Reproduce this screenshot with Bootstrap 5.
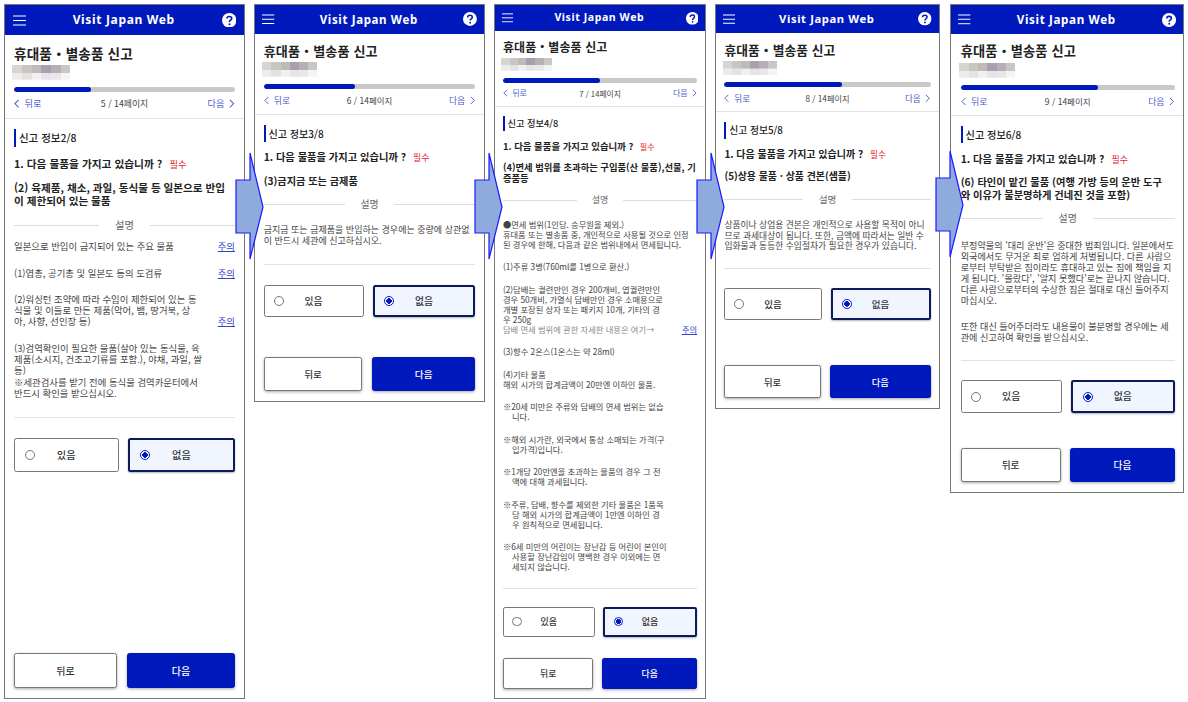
<!DOCTYPE html>
<html lang="ko">
<head>
  <meta charset="UTF-8" />
  <meta name="viewport" content="width=device-width, initial-scale=1.0"/>
  <link href="https://cdn.jsdelivr.net/npm/bootstrap@5.3.0/dist/css/bootstrap.min.css" rel="stylesheet"/>
  <title>Visit Japan Web</title>
  <style>
    html, body { height: 100%; }
    body { background: #fff; font-family: "Noto Sans CJK KR", "Noto Sans", sans-serif; color: #333; overflow: hidden; }
    .canvas { width: 1188px; height: 702px; }

    /* five phone captures on a free canvas, each one with its own scale */
    .phone { position: absolute; top: 4px; border: 1px solid #777; background: #fff; }
    .phone-5 { left: 4px; width: 241px; height: 695px; font-size: 10px; }
    .phone-6 { left: 254px; width: 231px; height: 398px; font-size: 9.6px; }
    .phone-7 { left: 494px; width: 212px; height: 695px; font-size: 8.8px; }
    .phone-8 { left: 715px; width: 225px; height: 405px; font-size: 9.35px; }
    .phone-9 { left: 950px; width: 234px; height: 489px; font-size: 9.7px; }

    .app-head { height: 3em; background: #0019bd; color: #fff; padding: 0 .75em; flex: none; }
    .app-title { font-family: "Noto Sans", sans-serif; font-weight: 700; font-size: 1.2em; letter-spacing: .055em; }
    .ico-menu { width: 1.3em; height: 1.1em; }
    .ico-help { width: 1.45em; height: 1.45em; }

    .page-top { padding: .75em .9em 0; border-bottom: 1px solid #e2e2e2; flex: none; }
    .page-name { font-size: 1.36em; font-weight: 700; line-height: 1.5; color: #222; letter-spacing: .01em; }
    .blur-name { width: 5.8em; height: 1.5em; margin: .2em 0 0 -.2em; background:
      linear-gradient(to right, #d8d5d0 0 17%, #c9c6c2 17% 34%, #bdbab8 34% 50%, #a99fae 50% 67%, #b5b0b6 67% 84%, #c9c6c6 84%) top / 100% 55% no-repeat,
      linear-gradient(to right, #ececea 0 17%, #e4e3e3 17% 34%, #f0f0f0 34% 50%, #e6e4e8 50% 67%, #e8e8e8 67% 84%, #f4f4f4 84%) bottom / 100% 45% no-repeat; }
    .step-bar { height: .42em; margin-top: .6em; background: #c9c9c9; border-radius: 1em; }
    .step-bar .progress-bar { background: #0019bd; border-radius: 1em; }
    .step-nav { height: 2.55em; font-size: 1em; padding-bottom: .2em; }
    .step-link { color: #4a5ccb; font-size: .92em; text-decoration: none; display: inline-flex; align-items: center; gap: .55em; }
    .step-count { color: #444; font-size: .88em; }
    .ico-chev { width: .6em; height: 1em; }

    .page-body { padding: 0 .9em; min-height: 0; }
    .phone-9 .page-top, .phone-9 .page-body { padding-left: 1em; padding-right: .85em; }
    .sec-name { border-left: .22em solid #0019bd; padding-left: .28em; margin-top: 1em; height: 1.7em; line-height: 1.7em; font-size: 1.05em; font-weight: 500; color: #222; }
    .ask { font-size: 1.07em; font-weight: 600; margin-top: .75em; line-height: 1.6; color: #222; }
    .must { color: #e8192c; font-size: .86em; font-weight: 400; margin-left: .8em; }
    .item-name { font-size: 1.06em; font-weight: 600; line-height: 1.25; margin-top: .85em; color: #222; }
    .rule-label { color: #666; font-size: 1.03em; margin-top: .95em; gap: 1.6em; }
    .rule-label::before, .rule-label::after { content: ""; flex: 1; border-top: 1px solid #ddd; }
    .explain { font-size: .94em; line-height: 1.2; margin-top: 1.55em; color: #444; white-space: nowrap; }
    .phone-5 .explain { margin-top: .9em; }
    .explain p { margin: 0 0 1.6em; }
    .phone-7 .explain p { margin-bottom: 1.54em; }
    .explain p:last-child { margin-bottom: 0; }
    .explain a { color: #3344cc; }
    .note { padding-left: 1.1em; text-indent: -1.1em; }
    .soft { color: #888; }
    .end-rule { border-top: 1px solid #e2e2e2; margin-top: 1.8em; }

    .choice { flex: 1 1 0; height: 3.4em; border: 1px solid #777; border-radius: .25em; background: #fff; padding-left: .95em; font-size: 1em; font-weight: 500; color: #333; }
    .choice.on { border: 2px solid #0a1a5a; background: #f0f5ff; box-shadow: 0 1px 2px rgba(0,0,0,.3); }
    .choice span { flex: 1; text-align: center; padding-right: 2em; font-size: 1.02em; }
    .choice .form-check-input { margin: 0; width: 1.05em; height: 1.05em; border-color: #777; flex: none; }
    .choice .form-check-input:checked[type=radio] { background-color: #fff; border-color: #0019bd; background-image: radial-gradient(circle, #0019bd 0 46%, #fff 52%); }
    .choices { gap: .95em; margin-top: 2em; }

    .acts { gap: 1em; flex: none; margin-bottom: 1.05em; }
    .act { height: 3.5em; padding: 0; border-radius: .25em; font-size: 1em; font-weight: 500; box-shadow: 0 1px 3px rgba(0,0,0,.35); }
    .act-back { flex: 103 1 0; background: #fff; border: 1px solid #777; color: #333; }
    .act-next { flex: 108 1 0; background: #0019bd; border: 1px solid #0019bd; color: #fff; }

    .flow-arrow { position: absolute; width: 30px; height: 110px; top: 151px; overflow: visible; }
    .arrow-a { left: 235px; } .arrow-b { left: 474px; } .arrow-c { left: 696px; } .arrow-d { left: 935px; top: 149px; }
    .flow-arrow polygon { fill: #8faadc; stroke: #1a1aff; stroke-width: 1.2; }
  </style>
</head>
<body>
  <svg width="0" height="0" class="position-absolute">
    <symbol id="i-menu" viewBox="0 0 13 11"><path d="M0 1h13M0 5.5h13M0 10h13" stroke="#fff" stroke-width="1.1"/></symbol>
    <symbol id="i-help" viewBox="0 0 16 16"><circle cx="8" cy="8" r="8" fill="#fff"/><path d="M5.4 6.2c0-1.5 1.1-2.4 2.7-2.4s2.6.9 2.6 2.2c0 1.9-2.5 2-2.5 3.9" fill="none" stroke="#0019bd" stroke-width="1.8"/><circle cx="8.2" cy="12.3" r="1.1" fill="#0019bd"/></symbol>
    <symbol id="i-prev" viewBox="0 0 6 10"><path d="M5 1 1 5l4 4" fill="none" stroke="#4a5ccb" stroke-width="1.1"/></symbol>
    <symbol id="i-next" viewBox="0 0 6 10"><path d="m1 1 4 4-4 4" fill="none" stroke="#4a5ccb" stroke-width="1.1"/></symbol>
  </svg>

  <div class="canvas">

    <!-- 5 / 14 -->
    <section class="phone phone-5 d-flex flex-column">
      <header class="app-head d-flex align-items-center justify-content-between">
        <svg class="ico-menu"><use href="#i-menu"/></svg><span class="app-title">Visit Japan Web</span><svg class="ico-help"><use href="#i-help"/></svg>
      </header>
      <div class="page-top">
        <div class="page-name">휴대품・별송품 신고</div>
        <div class="blur-name"></div>
        <div class="progress step-bar"><div class="progress-bar" style="width: 35%"></div></div>
        <div class="step-nav d-flex align-items-center justify-content-between">
          <a class="step-link" href="#"><svg class="ico-chev"><use href="#i-prev"/></svg>뒤로</a><span class="step-count">5 / 14페이지</span><a class="step-link" href="#">다음<svg class="ico-chev"><use href="#i-next"/></svg></a>
        </div>
      </div>
      <div class="page-body flex-grow-1 d-flex flex-column">
        <div class="sec-name">신고 정보2/8</div>
        <div class="ask">1. 다음 물품을 가지고 있습니까 ?<span class="must">필수</span></div>
        <div class="item-name">(2) 육제품, 채소, 과일, 동식물 등 일본으로 반입<br>이 제한되어 있는 물품</div>
        <div class="rule-label d-flex align-items-center">설명</div>
        <div class="explain">
          <p class="d-flex justify-content-between align-items-end"><span>일본으로 반입이 금지되어 있는 주요 물품</span><a href="#">주의</a></p>
          <p class="d-flex justify-content-between align-items-end"><span>(1)엽총, 공기총 및 일본도 등의 도검류</span><a href="#">주의</a></p>
          <p class="d-flex justify-content-between align-items-end"><span>(2)워싱턴 조약에 따라 수입이 제한되어 있는 동<br>식물 및 이들로 만든 제품(악어, 뱀, 땅거북, 상<br>아, 사향, 선인장 등)</span><a href="#">주의</a></p>
          <p>(3)검역확인이 필요한 물품(살아 있는 동식물, 육<br>제품(소시지, 건조고기류를 포함.), 야채, 과일, 쌀<br>등)<br>※세관검사를 받기 전에 동식물 검역카운터에서<br>반드시 확인을 받으십시오.</p>
        </div>
        <div class="end-rule"></div>
        <div class="choices d-flex">
          <label class="choice d-flex align-items-center"><input class="form-check-input" type="radio" name="r5"><span>있음</span></label>
          <label class="choice on d-flex align-items-center"><input class="form-check-input" type="radio" name="r5" checked><span>없음</span></label>
        </div>
        <div class="acts d-flex mt-auto">
          <button class="btn act act-back" type="button">뒤로</button>
          <button class="btn act act-next" type="button">다음</button>
        </div>
      </div>
    </section>

    <!-- 6 / 14 -->
    <section class="phone phone-6 d-flex flex-column">
      <header class="app-head d-flex align-items-center justify-content-between">
        <svg class="ico-menu"><use href="#i-menu"/></svg><span class="app-title">Visit Japan Web</span><svg class="ico-help"><use href="#i-help"/></svg>
      </header>
      <div class="page-top">
        <div class="page-name">휴대품・별송품 신고</div>
        <div class="blur-name"></div>
        <div class="progress step-bar"><div class="progress-bar" style="width: 43%"></div></div>
        <div class="step-nav d-flex align-items-center justify-content-between">
          <a class="step-link" href="#"><svg class="ico-chev"><use href="#i-prev"/></svg>뒤로</a><span class="step-count">6 / 14페이지</span><a class="step-link" href="#">다음<svg class="ico-chev"><use href="#i-next"/></svg></a>
        </div>
      </div>
      <div class="page-body flex-grow-1 d-flex flex-column">
        <div class="sec-name">신고 정보3/8</div>
        <div class="ask">1. 다음 물품을 가지고 있습니까 ?<span class="must">필수</span></div>
        <div class="item-name">(3)금지금 또는 금제품</div>
        <div class="rule-label d-flex align-items-center">설명</div>
        <div class="explain">
          <p>금지금 또는 금제품을 반입하는 경우에는 중량에 상관없<br>이 반드시 세관에 신고하십시오.</p>
        </div>
        <div class="end-rule"></div>
        <div class="choices d-flex">
          <label class="choice d-flex align-items-center"><input class="form-check-input" type="radio" name="r6"><span>있음</span></label>
          <label class="choice on d-flex align-items-center"><input class="form-check-input" type="radio" name="r6" checked><span>없음</span></label>
        </div>
        <div class="acts d-flex mt-auto">
          <button class="btn act act-back" type="button">뒤로</button>
          <button class="btn act act-next" type="button">다음</button>
        </div>
      </div>
    </section>

    <!-- 7 / 14 -->
    <section class="phone phone-7 d-flex flex-column">
      <header class="app-head d-flex align-items-center justify-content-between">
        <svg class="ico-menu"><use href="#i-menu"/></svg><span class="app-title">Visit Japan Web</span><svg class="ico-help"><use href="#i-help"/></svg>
      </header>
      <div class="page-top">
        <div class="page-name">휴대품・별송품 신고</div>
        <div class="blur-name"></div>
        <div class="progress step-bar"><div class="progress-bar" style="width: 50%"></div></div>
        <div class="step-nav d-flex align-items-center justify-content-between">
          <a class="step-link" href="#"><svg class="ico-chev"><use href="#i-prev"/></svg>뒤로</a><span class="step-count">7 / 14페이지</span><a class="step-link" href="#">다음<svg class="ico-chev"><use href="#i-next"/></svg></a>
        </div>
      </div>
      <div class="page-body flex-grow-1 d-flex flex-column">
        <div class="sec-name">신고 정보4/8</div>
        <div class="ask">1. 다음 물품을 가지고 있습니까 ?<span class="must">필수</span></div>
        <div class="item-name">(4)면세 범위를 초과하는 구입품(산 물품),선물, 기<br>증품등</div>
        <div class="rule-label d-flex align-items-center">설명</div>
        <div class="explain">
          <p>●면세 범위(1인당. 승무원을 제외.)<br>휴대품 또는 별송품 중, 개인적으로 사용될 것으로 인정<br>된 경우에 한해, 다음과 같은 범위내에서 면세됩니다.</p>
          <p>(1)주류 3병(760ml를 1병으로 환산.)</p>
          <p class="d-flex justify-content-between align-items-end"><span>(2)담배는 궐련만인 경우 200개비, 엽궐련만인<br>경우 50개비, 가열식 담배만인 경우 소매용으로<br>개별 포장된 상자 또는 패키지 10개, 기타의 경<br>우 250g<br><span class="soft">담배 면세 범위에 관한 자세한 내용은 여기→</span></span><a href="#">주의</a></p>
          <p>(3)향수 2온스(1온스는 약 28ml)</p>
          <p>(4)기타 물품<br>해외 시가의 합계금액이 20만엔 이하인 물품.</p>
          <p class="note">※20세 미만은 주류와 담배의 면세 범위는 없습<br>니다.</p>
          <p class="note">※해외 시가란, 외국에서 통상 소매되는 가격(구<br>입가격)입니다.</p>
          <p class="note">※1개당 20만엔을 초과하는 물품의 경우 그 전<br>액에 대해 과세됩니다.</p>
          <p class="note">※주류, 담배, 향수를 제외한 기타 물품은 1품목<br>당 해외 시가의 합계금액이 1만엔 이하인 경<br>우 원칙적으로 면세됩니다.</p>
          <p class="note">※6세 미만의 어린이는 장난감 등 어린이 본인이<br>사용할 장난감임이 명백한 경우 이외에는 면<br>세되지 않습니다.</p>
        </div>
        <div class="end-rule"></div>
        <div class="choices d-flex">
          <label class="choice d-flex align-items-center"><input class="form-check-input" type="radio" name="r7"><span>있음</span></label>
          <label class="choice on d-flex align-items-center"><input class="form-check-input" type="radio" name="r7" checked><span>없음</span></label>
        </div>
        <div class="acts d-flex mt-auto">
          <button class="btn act act-back" type="button">뒤로</button>
          <button class="btn act act-next" type="button">다음</button>
        </div>
      </div>
    </section>

    <!-- 8 / 14 -->
    <section class="phone phone-8 d-flex flex-column">
      <header class="app-head d-flex align-items-center justify-content-between">
        <svg class="ico-menu"><use href="#i-menu"/></svg><span class="app-title">Visit Japan Web</span><svg class="ico-help"><use href="#i-help"/></svg>
      </header>
      <div class="page-top">
        <div class="page-name">휴대품・별송품 신고</div>
        <div class="blur-name"></div>
        <div class="progress step-bar"><div class="progress-bar" style="width: 57%"></div></div>
        <div class="step-nav d-flex align-items-center justify-content-between">
          <a class="step-link" href="#"><svg class="ico-chev"><use href="#i-prev"/></svg>뒤로</a><span class="step-count">8 / 14페이지</span><a class="step-link" href="#">다음<svg class="ico-chev"><use href="#i-next"/></svg></a>
        </div>
      </div>
      <div class="page-body flex-grow-1 d-flex flex-column">
        <div class="sec-name">신고 정보5/8</div>
        <div class="ask">1. 다음 물품을 가지고 있습니까 ?<span class="must">필수</span></div>
        <div class="item-name">(5)상용 물품 · 상품 견본(샘플)</div>
        <div class="rule-label d-flex align-items-center">설명</div>
        <div class="explain">
          <p>상품이나 상업용 견본은 개인적으로 사용할 목적이 아니<br>므로 과세대상이 됩니다. 또한, 금액에 따라서는 일반 수<br>입화물과 동등한 수입절차가 필요한 경우가 있습니다.</p>
        </div>
        <div class="end-rule"></div>
        <div class="choices d-flex">
          <label class="choice d-flex align-items-center"><input class="form-check-input" type="radio" name="r8"><span>있음</span></label>
          <label class="choice on d-flex align-items-center"><input class="form-check-input" type="radio" name="r8" checked><span>없음</span></label>
        </div>
        <div class="acts d-flex mt-auto">
          <button class="btn act act-back" type="button">뒤로</button>
          <button class="btn act act-next" type="button">다음</button>
        </div>
      </div>
    </section>

    <!-- 9 / 14 -->
    <section class="phone phone-9 d-flex flex-column">
      <header class="app-head d-flex align-items-center justify-content-between">
        <svg class="ico-menu"><use href="#i-menu"/></svg><span class="app-title">Visit Japan Web</span><svg class="ico-help"><use href="#i-help"/></svg>
      </header>
      <div class="page-top">
        <div class="page-name">휴대품・별송품 신고</div>
        <div class="blur-name"></div>
        <div class="progress step-bar"><div class="progress-bar" style="width: 64%"></div></div>
        <div class="step-nav d-flex align-items-center justify-content-between">
          <a class="step-link" href="#"><svg class="ico-chev"><use href="#i-prev"/></svg>뒤로</a><span class="step-count">9 / 14페이지</span><a class="step-link" href="#">다음<svg class="ico-chev"><use href="#i-next"/></svg></a>
        </div>
      </div>
      <div class="page-body flex-grow-1 d-flex flex-column">
        <div class="sec-name">신고 정보6/8</div>
        <div class="ask">1. 다음 물품을 가지고 있습니까 ?<span class="must">필수</span></div>
        <div class="item-name">(6) 타인이 맡긴 물품 (여행 가방 등의 운반 도구<br>와 이유가 불분명하게 건네진 것을 포함)</div>
        <div class="rule-label d-flex align-items-center">설명</div>
        <div class="explain">
          <p>부정약물의 '대리 운반'은 중대한 범죄입니다. 일본에서도<br>외국에서도 무거운 죄로 엄하게 처벌됩니다. 다른 사람으<br>로부터 부탁받은 짐이라도 휴대하고 있는 짐에 책임을 지<br>게 됩니다. '몰랐다', '알지 못했다'로는 끝나지 않습니다.<br>다른 사람으로부터의 수상한 짐은 절대로 대신 들어주지<br>마십시오.</p>
          <p>또한 대신 들어주더라도 내용물이 불분명할 경우에는 세<br>관에 신고하여 확인을 받으십시오.</p>
        </div>
        <div class="end-rule"></div>
        <div class="choices d-flex">
          <label class="choice d-flex align-items-center"><input class="form-check-input" type="radio" name="r9"><span>있음</span></label>
          <label class="choice on d-flex align-items-center"><input class="form-check-input" type="radio" name="r9" checked><span>없음</span></label>
        </div>
        <div class="acts d-flex mt-auto">
          <button class="btn act act-back" type="button">뒤로</button>
          <button class="btn act act-next" type="button">다음</button>
        </div>
      </div>
    </section>

    <!-- arrows between the captures -->
    <svg class="flow-arrow arrow-a" viewBox="0 0 30 110"><polygon points="1,29 15,29 15,2 28,56 15,108 15,82 1,82"/></svg>
    <svg class="flow-arrow arrow-b" viewBox="0 0 30 110"><polygon points="1,29 15,29 15,2 28,56 15,108 15,82 1,82"/></svg>
    <svg class="flow-arrow arrow-c" viewBox="0 0 30 110"><polygon points="1,29 15,29 15,2 28,56 15,108 15,82 1,82"/></svg>
    <svg class="flow-arrow arrow-d" viewBox="0 0 30 110"><polygon points="1,29 15,29 15,2 28,56 15,108 15,82 1,82"/></svg>
  </div>
</body>
</html>
